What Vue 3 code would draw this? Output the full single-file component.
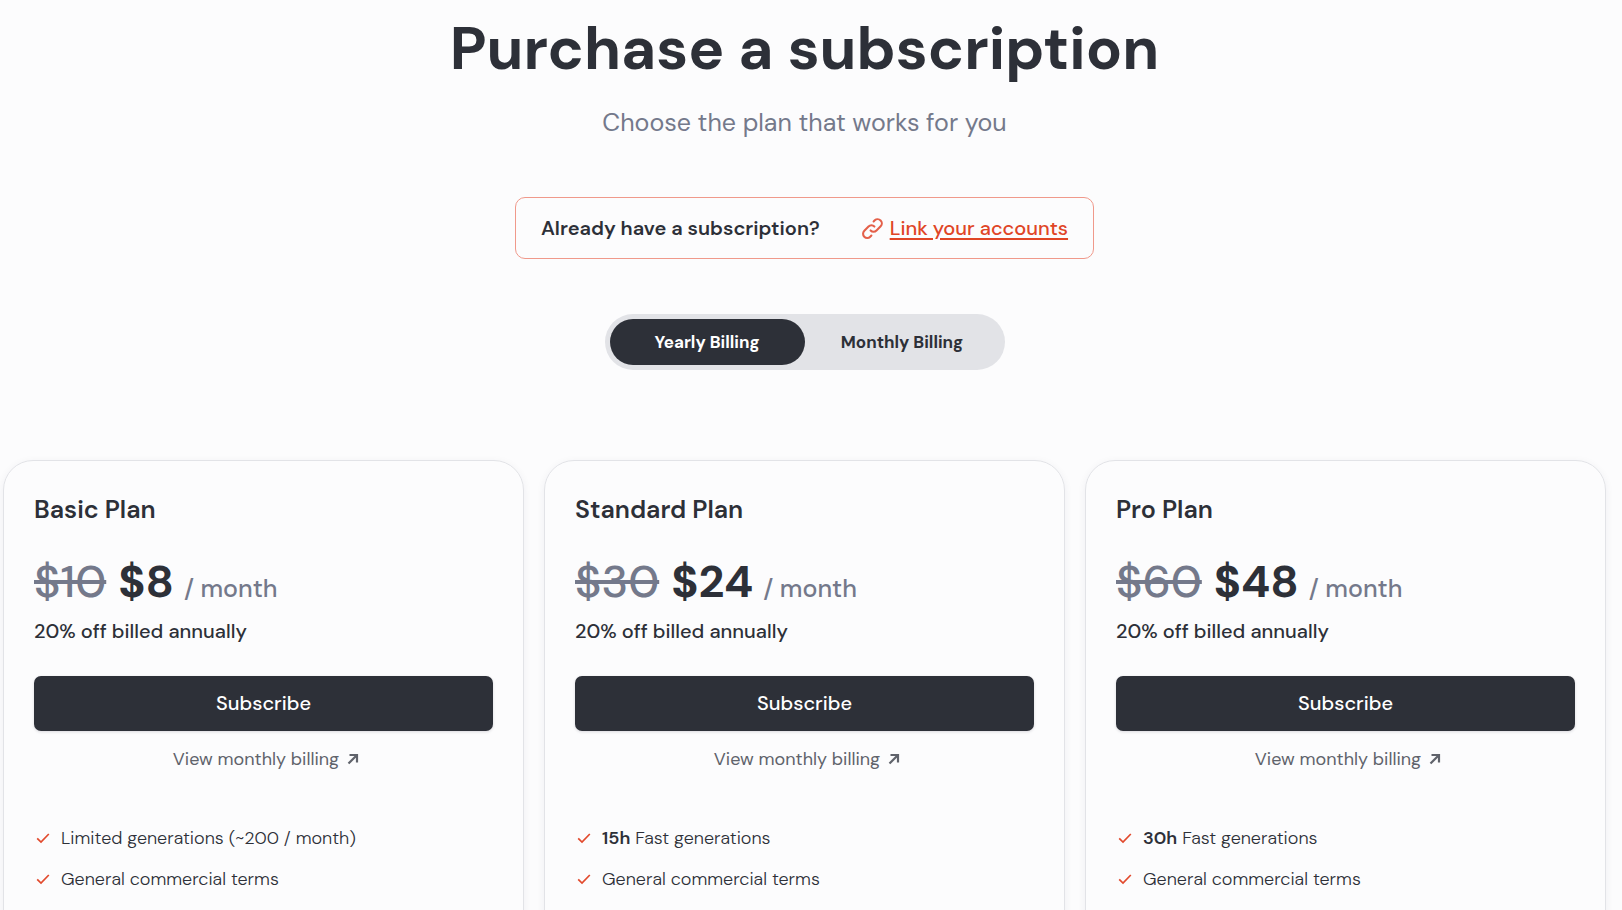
<script setup>
import { ref } from 'vue'

const billing = ref('yearly')

const plans = [
  {
    name: 'Basic Plan',
    full: '$10',
    price: '$8',
    features: [
      { strong: '', text: 'Limited generations (~200 / month)' },
      { strong: '', text: 'General commercial terms' }
    ]
  },
  {
    name: 'Standard Plan',
    full: '$30',
    price: '$24',
    features: [
      { strong: '15h', text: 'Fast generations' },
      { strong: '', text: 'General commercial terms' }
    ]
  },
  {
    name: 'Pro Plan',
    full: '$60',
    price: '$48',
    features: [
      { strong: '30h', text: 'Fast generations' },
      { strong: '', text: 'General commercial terms' }
    ]
  }
]
</script>

<template>
  <main class="page">
    <header class="intro">
      <h1 class="title">Purchase a subscription</h1>
      <p class="subtitle">Choose the plan that works for you</p>
    </header>

    <div class="banner">
      <span class="question">Already have a subscription?</span>
      <a class="link" href="#link">
        <svg class="link-icon" viewBox="0 0 24 24" aria-hidden="true">
          <path d="M13.828 10.172a4 4 0 0 0-5.656 0l-4 4a4 4 0 1 0 5.656 5.656l1.102-1.101m-.758-4.899a4 4 0 0 0 5.656 0l4-4a4 4 0 0 0-5.656-5.656l-1.1 1.1" />
        </svg>
        <span class="link-text">Link your accounts</span>
      </a>
    </div>

    <div class="toggle">
      <button type="button" class="option" :class="{ active: billing === 'yearly' }" :aria-pressed="billing === 'yearly'" @click="billing = 'yearly'">Yearly Billing</button>
      <button type="button" class="option" :class="{ active: billing === 'monthly' }" :aria-pressed="billing === 'monthly'" @click="billing = 'monthly'">Monthly Billing</button>
    </div>

    <section class="plans">
      <article v-for="plan in plans" :key="plan.name" class="card">
        <h2 class="name">{{ plan.name }}</h2>
        <p class="price">
          <s class="full">{{ plan.full }}</s>
          <strong class="now">{{ plan.price }}</strong>
          <span class="period">/ month</span>
        </p>
        <p class="note">20% off billed annually</p>
        <button type="button" class="subscribe">Subscribe</button>
        <a class="view" href="#monthly">
          <span>View monthly billing</span>
          <svg class="arrow" viewBox="0 0 12 12" aria-hidden="true">
            <path d="M1.5 10.5 9.5 2.5M2.5 2h7.5v7.5" />
          </svg>
        </a>
        <ul class="features">
          <li v-for="item in plan.features" :key="item.text" class="feature">
            <svg class="check" viewBox="0 0 18 18" aria-hidden="true">
              <path d="M3.2 9.4 7 13 14.8 5" />
            </svg>
            <span><b v-if="item.strong" class="hours">{{ item.strong }}</b>{{ item.strong ? ' ' : '' }}{{ item.text }}</span>
          </li>
        </ul>
      </article>
    </section>
  </main>
</template>

<style>
html {
  background: #fcfcfd;
}
body {
  overflow: hidden;
}
</style>

<style scoped>
.page {
  box-sizing: border-box;
  height: 100vh;
  overflow: hidden;
  padding: 13px 16px 0 3px;
  display: flex;
  flex-direction: column;
  align-items: center;
  font-family: "DM Sans", Inter, sans-serif;
  color: #2d3038;
  background: #fcfcfd;
}
.intro {
  text-align: center;
}
.title {
  margin: 0;
  font-size: 60px;
  line-height: 72px;
  font-weight: 700;
}
.subtitle {
  margin: 20px 0 0;
  font-size: 25px;
  line-height: 36px;
  color: #74798b;
}
.banner {
  display: flex;
  flex-shrink: 0;
  align-items: center;
  gap: 40px;
  margin-top: 56px;
  padding: 15px 25px;
  border: 1px solid #f0998b;
  border-radius: 10px;
  font-size: 20px;
  line-height: 30px;
}
.question {
  font-weight: 600;
}
.link {
  display: flex;
  align-items: center;
  gap: 5px;
  color: #e04526;
  font-weight: 500;
  text-decoration: none;
}
.link-icon {
  width: 25px;
  height: 25px;
  fill: none;
  stroke: #e4604a;
  stroke-width: 2;
  stroke-linecap: round;
  stroke-linejoin: round;
}
.link-text {
  text-decoration: underline;
  text-decoration-thickness: 2px;
  text-underline-offset: 3px;
}
.toggle {
  display: flex;
  flex-shrink: 0;
  margin-top: 55px;
  padding: 5px;
  border-radius: 28px;
  background: #e2e3e7;
}
.option {
  width: 195px;
  height: 46px;
  padding: 0;
  border: 0;
  border-radius: 23px;
  background: transparent;
  color: #2d3038;
  font-family: inherit;
  font-size: 17px;
  font-weight: 700;
}
.option.active {
  background: #2d3038;
  color: #fff;
}
.plans {
  display: grid;
  grid-template-columns: repeat(3, 1fr);
  gap: 20px;
  width: 100%;
  margin-top: 90px;
}
.card {
  display: flex;
  flex-direction: column;
  min-width: 0;
  padding: 30px 30px 60px;
  border: 1px solid #e2e3e7;
  border-radius: 30px;
  box-shadow: 0 2px 8px rgba(30, 35, 60, 0.06);
}
.name {
  margin: 0;
  font-size: 25px;
  line-height: 38px;
  font-weight: 600;
}
.price {
  display: flex;
  align-items: baseline;
  margin: 26px 0 0;
  line-height: 54px;
  font-weight: 500;
  color: #74798b;
}
.full {
  font-size: 45px;
  text-decoration-thickness: 4px;
}
.now {
  margin-left: 12px;
  font-size: 45px;
  font-weight: 700;
  color: #2d3038;
}
.period {
  margin-left: 10px;
  font-size: 25px;
}
.note {
  margin: 0;
  font-size: 20px;
  line-height: 30px;
  font-weight: 500;
}
.subscribe {
  height: 55px;
  margin-top: 30px;
  padding: 0 0 2px;
  border: 0;
  border-radius: 7px;
  background: #2d3038;
  box-shadow: 0 1px 3px rgba(30, 20, 50, 0.15);
  color: #fff;
  font-family: inherit;
  font-size: 20px;
  font-weight: 500;
}
.view {
  display: flex;
  align-items: center;
  justify-content: center;
  gap: 8px;
  margin-top: 14px;
  padding-left: 5px;
  font-size: 18px;
  line-height: 28px;
  color: #60636b;
  text-decoration: none;
}
.arrow {
  width: 12px;
  height: 12px;
  fill: none;
  stroke: currentColor;
  stroke-width: 2.2;
}
.features {
  display: grid;
  gap: 13px;
  margin: 51px 0 0;
  padding: 0;
  list-style: none;
  font-size: 18px;
  line-height: 28px;
  font-weight: 300;
}
.feature {
  display: flex;
  align-items: center;
  gap: 9px;
}
.check {
  width: 18px;
  height: 18px;
  fill: none;
  stroke: #e24a2d;
  stroke-width: 1.7;
}
.hours {
  font-weight: 600;
}
</style>
